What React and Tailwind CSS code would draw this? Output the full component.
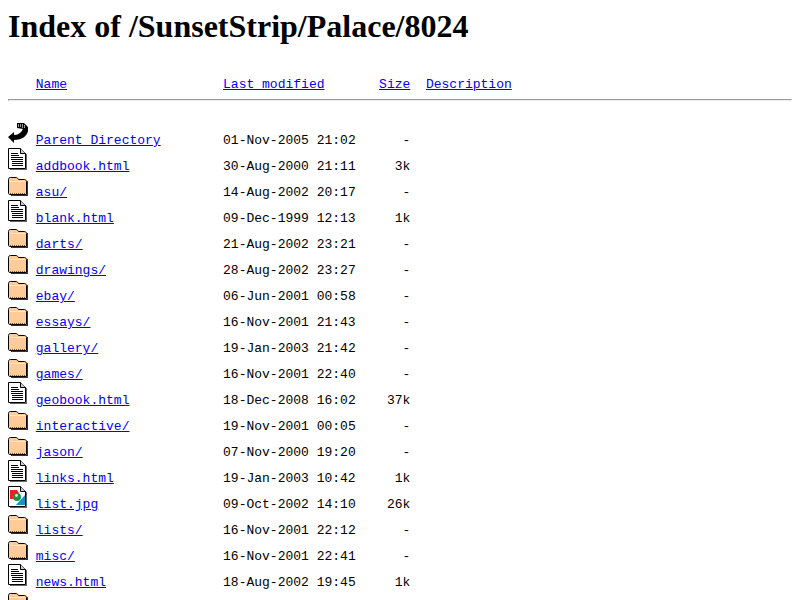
const entries = [
  ["back", "Parent Directory", "01-Nov-2005 21:02", "-"],
  ["text", "addbook.html", "30-Aug-2000 21:11", "3k"],
  ["folder", "asu/", "14-Aug-2002 20:17", "-"],
  ["text", "blank.html", "09-Dec-1999 12:13", "1k"],
  ["folder", "darts/", "21-Aug-2002 23:21", "-"],
  ["folder", "drawings/", "28-Aug-2002 23:27", "-"],
  ["folder", "ebay/", "06-Jun-2001 00:58", "-"],
  ["folder", "essays/", "16-Nov-2001 21:43", "-"],
  ["folder", "gallery/", "19-Jan-2003 21:42", "-"],
  ["folder", "games/", "16-Nov-2001 22:40", "-"],
  ["text", "geobook.html", "18-Dec-2008 16:02", "37k"],
  ["folder", "interactive/", "19-Nov-2001 00:05", "-"],
  ["folder", "jason/", "07-Nov-2000 19:20", "-"],
  ["text", "links.html", "19-Jan-2003 10:42", "1k"],
  ["image", "list.jpg", "09-Oct-2002 14:10", "26k"],
  ["folder", "lists/", "16-Nov-2001 22:12", "-"],
  ["folder", "misc/", "16-Nov-2001 22:41", "-"],
  ["text", "news.html", "18-Aug-2002 19:45", "1k"],
];

function PageOutline() {
  return (
    <>
      <path d="M.5 .5H12.5L17.5 5.5V20.5H.5Z" fill="#fff" stroke="#000" />
      <path d="M12.5 .5V5.5H17.5" fill="#ccc" stroke="#000" />
      <path d="M18 6H19V22H2V21H18Z" fill="#666" />
    </>
  );
}

function Icon({ type }) {
  return (
    <svg width="20" height="22" viewBox="0 0 20 22" className="inline align-baseline">
      {type === "back" && (
        <>
          <path d="M9 1L16 1L20 5V9C19 14 14 18 6 18V21L0 15L6 10V13C10 13 13 11 15 7L9 6Z" fill="#000" />
          <path d="M10 2H11V5H10ZM12 2H13V5H12ZM14 2H15V6H14ZM16 3H17V6H16Z" fill="#999" />
        </>
      )}
      {type === "text" && (
        <>
          <PageOutline />
          <path d="M3 5H10M3 7H11M3 9H15M3 11H15M4 13H15M4 15H15M4 17H15" stroke="#000" shapeRendering="crispEdges" />
        </>
      )}
      {type === "image" && (
        <>
          <PageOutline />
          <path d="M2 4H9L11 7L7 13H2Z" fill="#f02020" />
          <path d="M17 9V19H8L17 9Z" fill="#1890c8" />
          <circle cx="9" cy="11" r="4" fill="#109848" />
          <circle cx="8.5" cy="9.5" r="1.4" fill="#d8f0d8" />
        </>
      )}
      {type === "folder" && (
        <>
          <path d="M.5 5.5C.5 4 1.5 3.5 2.5 3.5H8C9 3.5 10 4.5 10.5 5.5H16.5C17.5 5.5 18.5 6.5 18.5 7.5V20.5H2C1 20.5 .5 20 .5 19Z" fill="#ffcc99" stroke="#000" />
          <path d="M2 7.5H17" stroke="#ffe8cc" />
          <path d="M2 19.5H18" stroke="#8a5a2a" strokeDasharray="1 1" />
          <path d="M19 7H20V22H3V21H19Z" fill="#333" />
        </>
      )}
    </svg>
  );
}

function FileLink({ children }) {
  return (
    <a href="#" className="text-[#0000ee] underline">
      {children}
    </a>
  );
}

export default function App() {
  return (
    <div className="h-screen overflow-hidden bg-white p-2 text-black font-['Liberation_Serif',serif] leading-[normal]">
      <h1 className="mb-[21.44px] text-[32px] font-bold">Index of /SunsetStrip/Palace/8024</h1>
      <pre className="my-[13px] text-[13px] font-['Liberation_Mono',monospace]">
        <span className="inline-block w-5 h-[22px]" /> <FileLink>Name</FileLink>{" ".repeat(20)}<FileLink>Last modified</FileLink>{" ".repeat(7)}<FileLink>Size</FileLink>{"  "}<FileLink>Description</FileLink>
        <hr className="my-[6.5px] border border-t-[#999] border-l-[#999] border-r-[#eee] border-b-[#eee]" />
        {"\n"}
        {entries.map(([type, name, date, size]) => (
          <span key={name}>
            <Icon type={type} /> <FileLink>{name}</FileLink>
            {" ".repeat(24 - name.length)}
            {date}
            {size.padStart(7)}
            {"\n"}
          </span>
        ))}
        <Icon type="folder" />
      </pre>
    </div>
  );
}
